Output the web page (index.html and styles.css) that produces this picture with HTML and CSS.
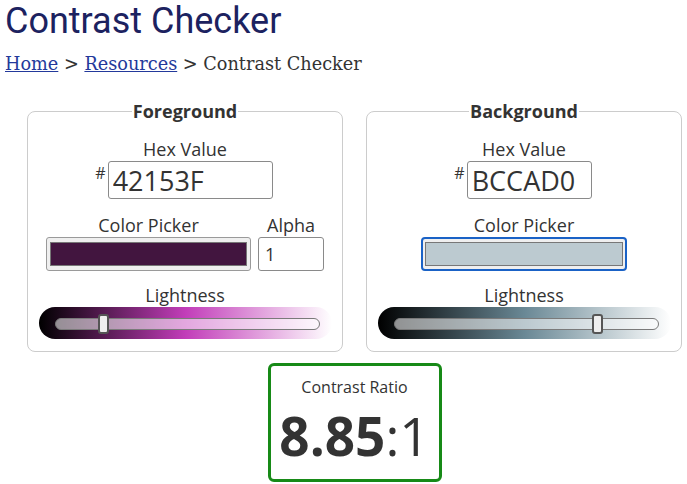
FILE: index.html
```html
<!DOCTYPE html>
<html lang="en">
<head>
<meta charset="utf-8">
<title>Contrast Checker</title>
<link rel="stylesheet" href="styles.css">
</head>
<body>
<h1 class="title">Contrast Checker</h1>
<nav class="crumbs"><a href="#">Home</a> &gt; <a href="#">Resources</a> &gt; Contrast Checker</nav>

<main class="checker">
  <div class="panels">
    <fieldset class="panel">
      <legend class="panel-title">Foreground</legend>
      <div class="group">
        <label class="lbl">Hex Value</label>
        <div class="hex-row"><span class="hash">#</span><input class="hex hex-fg" type="text" value="42153F"></div>
      </div>
      <div class="row">
        <div class="group">
          <label class="lbl">Color Picker</label>
          <div class="swatch-box swatch-fg"><div class="swatch" style="background:#42153F"></div></div>
        </div>
        <div class="group">
          <label class="lbl">Alpha</label>
          <input class="alpha" type="text" value="1">
        </div>
      </div>
      <div class="group slider-group">
        <label class="lbl">Lightness</label>
        <div class="band band-fg">
          <div class="track"><div class="thumb" style="left:16.5%"></div></div>
        </div>
      </div>
    </fieldset>

    <fieldset class="panel">
      <legend class="panel-title">Background</legend>
      <div class="group">
        <label class="lbl">Hex Value</label>
        <div class="hex-row"><span class="hash">#</span><input class="hex hex-bg" type="text" value="BCCAD0"></div>
      </div>
      <div class="row">
        <div class="group">
          <label class="lbl">Color Picker</label>
          <div class="swatch-box swatch-bg focused"><div class="swatch" style="background:#BCCAD0"></div></div>
        </div>
      </div>
      <div class="group slider-group">
        <label class="lbl">Lightness</label>
        <div class="band band-bg">
          <div class="track"><div class="thumb" style="left:75.5%"></div></div>
        </div>
      </div>
    </fieldset>
  </div>

  <div class="ratio">
    <div class="ratio-label">Contrast Ratio</div>
    <div class="ratio-value"><b>8.85</b>:1</div>
  </div>
</main>
</body>
</html>
```

FILE: styles.css
```css
* { box-sizing: border-box; }

body {
  margin: 0;
  padding: 0 5px;
  background: #fff;
  color: #333;
  font-family: "Open Sans", sans-serif;
}

.title {
  margin: 0;
  font-family: Roboto, sans-serif;
  font-weight: 400;
  font-size: 36px;
  line-height: 42px;
  color: #1c2260;
}

.crumbs {
  margin-top: 12px;
  font-family: "DejaVu Serif", serif;
  font-size: 17.7px;
  line-height: 20px;
  color: #333;
}

.crumbs a { color: #23399b; }

.checker {
  margin-top: 25px;
  margin-left: 22px;
  width: 655px;
  display: flex;
  flex-direction: column;
  align-items: center;
}

.panels {
  display: flex;
  gap: 23px;
  width: 100%;
}

.panel {
  width: 316px;
  margin: 0;
  padding: 15px 10px 12px;
  border: 1px solid #ccc;
  border-radius: 8px;
  display: flex;
  flex-direction: column;
  align-items: center;
  gap: 15px;
}

.panel-title {
  margin: 0 auto;
  padding: 0 1px;
  font-weight: 700;
  font-size: 18px;
  line-height: 24px;
  color: #333;
}

.group {
  display: flex;
  flex-direction: column;
  align-items: center;
}

.slider-group { margin-top: -2px; }

.row {
  display: flex;
  gap: 7px;
  align-items: flex-end;
}

.lbl {
  font-size: 18px;
  line-height: 23px;
  color: #333;
}

.hex-row {
  display: flex;
  align-items: flex-start;
  gap: 2px;
  margin-left: -2px;
}

.hash {
  font-size: 16px;
  line-height: 18px;
  padding-top: 3px;
  color: #333;
}

.hex {
  height: 38px;
  border: 1px solid #8a8a8a;
  border-radius: 3px;
  padding: 0 4px;
  font-family: "Open Sans", sans-serif;
  font-size: 27px;
  color: #333;
  background: #fff;
}

.hex-fg { width: 165px; }
.hex-bg { width: 125px; }

.swatch-box {
  height: 34px;
  padding: 4px 3px;
  border: 1px solid #9a9a9a;
  border-radius: 3px;
  background: #efefef;
}

.swatch-fg { width: 205px; }
.swatch-bg { width: 206px; }

.swatch-box.focused {
  border: 2px solid #1a62c6;
  border-radius: 4px;
  padding: 3px 2px;
}

.swatch {
  height: 100%;
  border: 1px solid #777;
}

.alpha {
  width: 66px;
  height: 34px;
  border: 1px solid #8a8a8a;
  border-radius: 3px;
  padding: 0 6px;
  font-family: "Open Sans", sans-serif;
  font-size: 18px;
  color: #333;
  background: #fff;
}

.band {
  width: 293px;
  height: 32px;
  border-radius: 16px;
  padding: 11px 12px 0 16px;
}

.band-fg {
  background: linear-gradient(to right,
    hsl(304, 52%, 0%),
    hsl(304, 52%, 25%) 25%,
    hsl(304, 52%, 50%) 50%,
    hsl(304, 52%, 75%) 75%,
    hsl(304, 52%, 100%));
}

.band-bg {
  background: linear-gradient(to right,
    hsl(198, 17%, 0%),
    hsl(198, 17%, 25%) 25%,
    hsl(198, 17%, 50%) 50%,
    hsl(198, 17%, 75%) 75%,
    hsl(198, 17%, 100%));
}

.track {
  position: relative;
  height: 12px;
  border: 1px solid #7a7a7a;
  border-radius: 6px;
  background: rgba(255, 255, 255, 0.55);
}

.thumb {
  position: absolute;
  top: -5px;
  width: 11px;
  height: 20px;
  margin-left: -1px;
  background: #eee;
  border: 2px solid #555;
  border-radius: 3px;
}

.ratio {
  margin-top: 11px;
  width: 174px;
  height: 119px;
  border: 3px solid #178a17;
  border-radius: 6px;
  display: flex;
  flex-direction: column;
  align-items: center;
  padding-top: 9px;
}

.ratio-label {
  font-size: 16px;
  line-height: 24px;
  color: #333;
}

.ratio-value {
  font-size: 53px;
  line-height: 64px;
  color: #333;
  margin-top: 5px;
}

.ratio-value b { font-weight: 700; }
```
